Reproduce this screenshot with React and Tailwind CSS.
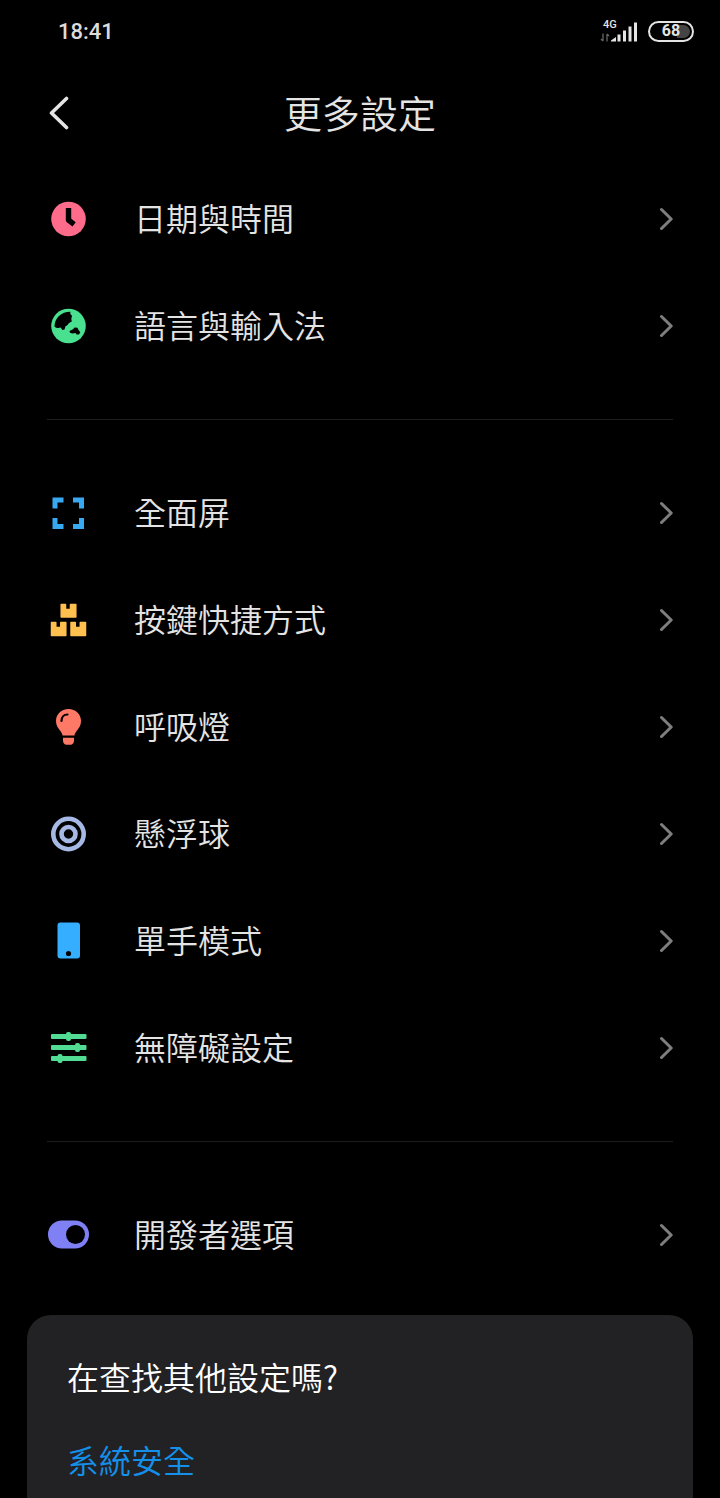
import clsx from 'clsx';

const ClockIcon = () => (
  <svg width="42" height="42" viewBox="0 0 42 42" aria-hidden="true">
    <circle cx="21.5" cy="21" r="17.3" fill="#ff6b8b" />
    <path d="M21.500 10v12l5.600 4.300" fill="none" stroke="#000" strokeWidth="5.400" strokeLinejoin="round" />
  </svg>
);

const GlobeIcon = () => (
  <svg width="42" height="42" viewBox="0 0 42 42" aria-hidden="true">
    <circle cx="21.5" cy="21" r="17.3" fill="#49e090" />
    <path
      d="M7.500 21.500C7.500 13 14 6.700 23.500 6.700L23.200 8.700 25 10.700 24.300 14 24.800 16.500 22 18 20.300 20.300 18.500 21.300 17.500 24.500 15.300 25 13.800 22.500 11.500 23 9 22.700z"
      fill="#000"
    />
    <path
      d="M22.500 26L26 24.200 27.500 22.500 30.500 22.700 31.500 25 33.300 27.300 32 29.500 29.700 29.500 28.500 28 25.500 28.500 23 27.800z"
      fill="#000"
    />
  </svg>
);

const FullScreenIcon = () => (
  <svg width="42" height="42" viewBox="0 0 42 42" aria-hidden="true">
    <path
      d="M8 16.500V8H16.500M26 8H34.500V16.500M34.500 26V34.500H26M16.500 34.500H8V26"
      fill="none"
      stroke="#38a8f0"
      strokeWidth="5"
    />
  </svg>
);

const BoxesIcon = () => (
  <svg width="42" height="42" viewBox="0 0 42 42" aria-hidden="true">
    <g fill="#ffc04f" stroke="#ffc04f" strokeWidth="1.500" strokeLinejoin="round">
      <path d="M14.200 5.500h4.300v5h5v-5h5.300v12.500h-14.600z" />
      <path d="M4.500 23.500h4.300v5h5v-5h5v13h-14.300z" />
      <path d="M24 23.500h4.300v5h5v-5h5.200v13H24z" />
    </g>
  </svg>
);

const BulbIcon = () => (
  <svg width="42" height="42" viewBox="0 0 42 42" aria-hidden="true">
    <path
      d="M21.500 3C14.300 3 9 8.300 9 15c0 4.300 2 7 4 9.500 1.300 1.700 2.300 3 2.500 5h12c.2-2 1.200-3.300 2.500-5 2-2.500 4-5.200 4-9.500C34 8.300 28.700 3 21.500 3z"
      fill="#ff7a66"
    />
    <path d="M16 31.800h11v2.700c0 2.500-1.500 4.300-3.500 4.300h-4c-2 0-3.500-1.800-3.500-4.300z" fill="#ff7a66" />
    <path d="M14.500 15c0-3.800 2.500-6.500 6-6.500" fill="none" stroke="#000" strokeWidth="2.200" strokeLinecap="round" />
  </svg>
);

const FloatingBallIcon = () => (
  <svg width="42" height="42" viewBox="0 0 42 42" fill="none" stroke="#a5b9e4" aria-hidden="true">
    <circle cx="21.500" cy="21" r="15.200" strokeWidth="4.600" />
    <circle cx="21.500" cy="21" r="7" strokeWidth="4.600" />
  </svg>
);

const PhoneIcon = () => (
  <svg width="42" height="42" viewBox="0 0 42 42" aria-hidden="true">
    <rect x="10.500" y="2.500" width="22.500" height="36" rx="3" fill="#35aeff" />
    <circle cx="21.500" cy="33.500" r="2.600" fill="#000" />
  </svg>
);

const SlidersIcon = () => (
  <svg width="42" height="42" viewBox="0 0 42 42" fill="#52dc93" aria-hidden="true">
    <rect x="4" y="7" width="35.500" height="5" rx="1" />
    <rect x="4" y="18" width="35.500" height="5" rx="1" />
    <rect x="4" y="29" width="35.500" height="5" rx="1" />
    <rect x="19" y="5" width="5" height="9" rx="2" />
    <rect x="28" y="16" width="5" height="9" rx="2" />
    <rect x="10.500" y="27" width="5" height="9" rx="2" />
  </svg>
);

const ToggleIcon = () => (
  <svg width="42" height="42" viewBox="0 0 42 42" aria-hidden="true">
    <rect x="1" y="6.500" width="41" height="28" rx="14" fill="#8080f5" />
    <circle cx="28.500" cy="20.500" r="9.500" fill="#000" />
  </svg>
);

const groups = [
  [
    { label: '日期與時間', Icon: ClockIcon },
    { label: '語言與輸入法', Icon: GlobeIcon },
  ],
  [
    { label: '全面屏', Icon: FullScreenIcon },
    { label: '按鍵快捷方式', Icon: BoxesIcon },
    { label: '呼吸燈', Icon: BulbIcon },
    { label: '懸浮球', Icon: FloatingBallIcon },
    { label: '單手模式', Icon: PhoneIcon },
    { label: '無障礙設定', Icon: SlidersIcon },
  ],
  [{ label: '開發者選項', Icon: ToggleIcon }],
];

// Clock on the left, signal and battery on the right
const StatusBar = () => (
  <div className="flex h-16 items-center justify-between pr-[26px] pb-0.5 pl-[58px] font-[Roboto,sans-serif]">
    <span className="pt-0.5 text-[22px] leading-none font-medium text-[#dcdcdc]">18:41</span>
    <div className="flex items-center gap-2.5">
      <div className="flex flex-col items-start">
        <span className="pl-1 text-[11px] leading-[10px] font-medium text-[#e4e4e4]">4G</span>
        <svg className="-mt-2" width="39" height="21" viewBox="0 0 39 21" aria-hidden="true">
          <path d="M4 11.500v7.500M2 17l2 2M8 19.500v-7.500M10 14l-2-2" fill="none" stroke="#666" strokeWidth="1.300" />
          <g fill="#e4e4e4">
            <path d="M12 19.500v-1l5-3.500v4.500z" />
            <rect x="18.500" y="12.500" width="3" height="7" />
            <rect x="24" y="8.500" width="3" height="11" />
            <rect x="29.500" y="4.500" width="3" height="15" />
            <rect x="35" y="0.500" width="3" height="19" />
          </g>
        </svg>
      </div>
      <div className="flex h-[21px] w-[46px] items-center justify-center rounded-full border-2 border-[#e4e4e4] bg-linear-to-r from-black from-65% to-[#444] to-65% bg-clip-content p-0.5">
        <span className="text-[16px] leading-none font-bold text-[#e4e4e4]">68</span>
      </div>
    </div>
  </div>
);

const SettingRow = ({ label, Icon }) => (
  <li>
    <a href="#" className="flex h-[107px] items-center">
      <Icon />
      <span className="ml-[45px] flex-1 pb-[3px] text-[32px] leading-10">{label}</span>
      <svg width="15" height="24" viewBox="0 0 15 24" aria-hidden="true">
        <path
          d="M3.500 2.500L13.200 12L3.500 21.500"
          fill="none"
          stroke="#7e7e7e"
          strokeWidth="3"
          strokeLinecap="round"
          strokeLinejoin="round"
        />
      </svg>
    </a>
  </li>
);

const App = () => {
  return (
    <div className="flex min-h-screen flex-col bg-black font-['Noto_Sans_CJK_TC',sans-serif] font-[350] text-[#e4e4e4]">
      <StatusBar />

      {/* Header */}
      <header className="grid h-[101px] grid-cols-[1fr_auto_1fr] items-center px-[47px] pb-1">
        <button type="button" aria-label="返回" className="justify-self-start">
          <svg width="24" height="34" viewBox="0 0 24 34" aria-hidden="true">
            <path
              d="M19.500 2.500L4.500 17L19.500 31.500"
              fill="none"
              stroke="#e4e4e4"
              strokeWidth="3.600"
              strokeLinecap="round"
              strokeLinejoin="round"
            />
          </svg>
        </button>
        <h1 className="pb-0.5 text-[38px] leading-12">更多設定</h1>
      </header>

      <main className="px-[47px]">
        {groups.map((items, i) => (
          <ul key={items[0].label} className={clsx(i > 0 && 'mt-10 border-t border-[#1c1c1c] pt-[39px]')}>
            {items.map((item) => (
              <SettingRow key={item.label} {...item} />
            ))}
          </ul>
        ))}
      </main>

      {/* Related settings */}
      <section className="mx-[27px] mt-[27px] flex-1 rounded-t-3xl bg-[#222224] px-10 pt-[41px]">
        <h2 className="text-[32px] leading-10 text-white">在查找其他設定嗎?</h2>
        <a href="#" className="mt-[43px] inline-block text-[32px] leading-10 text-[#1590ea]">
          系統安全
        </a>
      </section>
    </div>
  );
};

export default App;
